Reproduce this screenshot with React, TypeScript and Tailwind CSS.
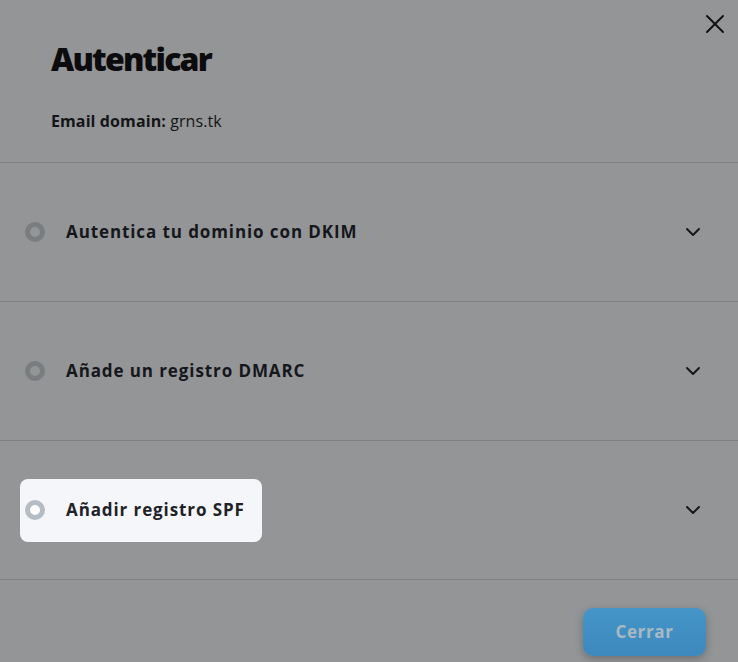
import { X, ChevronDown } from "lucide-react";

const steps = [
  { label: "Autentica tu dominio con DKIM", active: false },
  { label: "Añade un registro DMARC", active: false },
  { label: "Añadir registro SPF", active: true },
];

export default function App() {
  return (
    <div
      className="relative h-[662px] w-[738px] overflow-hidden bg-[#949596] text-[#15171c]"
      style={{ fontFamily: "'Open Sans', 'Noto Sans', sans-serif" }}
    >
      <button className="absolute right-[7px] top-[8px] text-[#111]">
        <X size={32} strokeWidth={1.5} />
      </button>

      <div className="px-[51px] pb-[29px] pt-[36px]">
        <h1 className="text-[32px] font-extrabold leading-[46px] tracking-[-1.8px] text-[#0c0c0e]">
          Autenticar
        </h1>
        <p className="mt-[27px] text-[16px] leading-[24px] tracking-[0.1px] text-[#141518]">
          <span className="font-bold">Email domain:</span> grns.tk
        </p>
      </div>

      <div className="border-t border-[#808182]">
        {steps.map((s) => (
          <div
            key={s.label}
            className="flex h-[139px] items-center justify-between border-b border-[#808182] pl-[20px] pr-[33px]"
          >
            <div
              className={
                s.active
                  ? "flex h-[63px] w-[242px] items-center gap-[21px] rounded-[8px] bg-[#f5f6f9] pl-[5px] text-[#1f2228]"
                  : "flex h-[63px] items-center gap-[21px] pl-[5px]"
              }
            >
              <span
                className={
                  s.active
                    ? "h-[20px] w-[20px] rounded-full border-[5px] border-[#b4bcc6] bg-white"
                    : "h-[20px] w-[20px] rounded-full border-[5px] border-[#7a7d7f] bg-[#949596]"
                }
              />
              <span className="text-[17px] font-bold tracking-[0.9px]">{s.label}</span>
            </div>
            <ChevronDown size={24} strokeWidth={2} className="text-[#17181c]" />
          </div>
        ))}
      </div>

      <div className="flex justify-end pr-[32px] pt-[28px]">
        <button className="h-[48px] w-[123px] rounded-[10px] bg-gradient-to-b from-[#4595c8] to-[#3d89bd] text-[17px] font-bold tracking-[0.6px] text-[#aab8c2] shadow-[0_3px_8px_rgba(0,0,0,0.25)]">
          Cerrar
        </button>
      </div>
    </div>
  );
}
